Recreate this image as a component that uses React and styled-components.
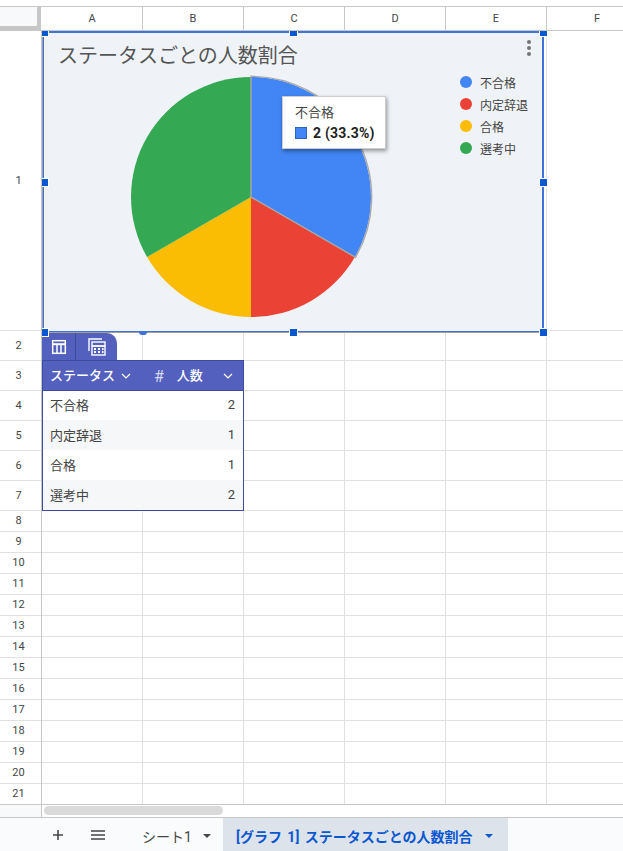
import React from "react";
import styled, { createGlobalStyle } from "styled-components";

const GlobalStyle = createGlobalStyle`
  html, body {
    margin: 0;
    padding: 0;
    background: #fff;
    overflow: hidden;
  }
  body {
    font-family: Roboto, "Noto Sans CJK JP", sans-serif;
  }
`;

const Page = styled.div`
  position: relative;
  width: 623px;
  height: 851px;
  overflow: hidden;
  display: flex;
  flex-direction: column;
  background: #fff;
  color: #444746;
`;

const TopStrip = styled.div`
  height: 6px;
  flex: none;
  border-bottom: 1px solid #c7c7c7;
`;

const ColumnHeader = styled.div`
  display: flex;
  height: 23px;
  flex: none;
  border-bottom: 1px solid #c7c7c7;
`;

const Corner = styled.div`
  width: 37px;
  height: 19px;
  flex: none;
  margin-right: 1px;
  background: #f8f9fa;
  border-right: 4px solid #c7c7c7;
  border-bottom: 4px solid #c7c7c7;
`;

const ColumnLabel = styled.div`
  width: 101px;
  flex: none;
  box-sizing: border-box;
  border-right: 1px solid #c7c7c7;
  display: flex;
  align-items: center;
  justify-content: center;
  font-size: 11px;
  padding-bottom: 1px;
`;

const Row = styled.div`
  display: flex;
  flex: none;
  height: ${(p) => p.$height}px;
  box-sizing: border-box;
  border-bottom: 1px solid #e1e1e1;
`;

const RowLabel = styled.div`
  width: 42px;
  flex: none;
  box-sizing: border-box;
  border-right: 1px solid #c7c7c7;
  display: flex;
  align-items: center;
  justify-content: center;
  font-size: 11px;
  padding: 0 4px 2px 0;
  margin-bottom: -1px;
`;

const Cell = styled.div`
  width: 101px;
  flex: none;
  box-sizing: border-box;
  border-right: 1px solid #e1e1e1;
  margin-bottom: -1px;
`;

const ScrollTrack = styled.div`
  display: flex;
  height: 14px;
  flex: none;
  box-sizing: border-box;
  border-top: 1px solid #c7c7c7;
  border-bottom: 1px solid #c7c7c7;
  margin-top: -1px;
`;

const ScrollGutter = styled.div`
  width: 42px;
  flex: none;
  box-sizing: border-box;
  background: #f8f9fa;
  border-right: 1px solid #c7c7c7;
`;

const ScrollThumb = styled.div`
  width: 179px;
  height: 9px;
  margin: 1px 0 0 2px;
  border-radius: 5px;
  background: #dadada;
`;

const TabBar = styled.div`
  flex: 1;
  display: flex;
  align-items: center;
  padding-left: 38px;
  background: #f9fbfd;
  font-size: 14px;
`;

const BarButton = styled.div`
  flex: none;
  width: 40px;
  height: 100%;
  display: flex;
  align-items: center;
  justify-content: center;
  color: #444746;
`;

const SheetTab = styled.div`
  height: 100%;
  display: flex;
  align-items: center;
  box-sizing: border-box;
  flex: none;
  font-weight: ${(p) => (p.$active ? 700 : 400)};
  color: ${(p) => (p.$active ? "#0b57d0" : "#444746")};
  background: ${(p) => (p.$active ? "#dde3ea" : "transparent")};
  padding-left: ${(p) => (p.$active ? 13 : 24)}px;
  padding-top: 3px;
  width: ${(p) => (p.$active ? 285 : 105)}px;
  word-spacing: ${(p) => (p.$active ? 2 : 0)}px;
  white-space: nowrap;
`;

const TabCaret = styled.span`
  width: 0;
  height: 0;
  margin-left: ${(p) => p.$gap}px;
  border-left: 4px solid transparent;
  border-right: 4px solid transparent;
  border-top: 4px solid currentColor;
`;

const ChartFrame = styled.div`
  position: absolute;
  left: 43px;
  top: 31px;
  width: 501px;
  height: 301px;
  box-sizing: border-box;
  background: #eff3f8;
  border: 2px solid #3f73d8;
  border-left-width: 1px;
  border-bottom-width: 1px;
  box-shadow: -1px 1px 0 #9e9e9e;
`;

const ChartTitle = styled.div`
  position: absolute;
  left: 14px;
  top: 9px;
  font-size: 20px;
  line-height: 28px;
  color: #555;
  white-space: nowrap;
`;

const MoreDots = styled.div`
  position: absolute;
  right: 11px;
  top: 7px;
  display: flex;
  flex-direction: column;
  gap: 2px;
`;

const Dot = styled.span`
  width: 4px;
  height: 4px;
  border-radius: 50%;
  background: #757575;
`;

const PieSvg = styled.svg`
  position: absolute;
  left: 84px;
  top: 41px;
`;

const Legend = styled.div`
  position: absolute;
  left: 416px;
  top: 38px;
  display: flex;
  flex-direction: column;
`;

const LegendItem = styled.div`
  display: flex;
  align-items: center;
  gap: 8px;
  height: 22px;
  font-size: 12px;
  color: #444;
`;

const LegendDot = styled.span`
  width: 12px;
  height: 12px;
  border-radius: 50%;
  background: ${(p) => p.$color};
`;

const Tooltip = styled.div`
  position: absolute;
  left: 238px;
  top: 63px;
  width: 104px;
  height: 53px;
  box-sizing: border-box;
  padding: 7px 12px;
  background: #fff;
  border: 1px solid #ccc;
  box-shadow: 1px 2px 4px rgba(0, 0, 0, 0.4);
  font-size: 13px;
`;

const TooltipLabel = styled.div`
  line-height: 18px;
  color: #444;
`;

const TooltipValue = styled.div`
  display: flex;
  align-items: center;
  gap: 6px;
  margin-top: 3px;
  font-size: 14px;
  font-weight: 700;
  letter-spacing: 0.2px;
  line-height: 16px;
  color: #222;
  white-space: nowrap;
`;

const Swatch = styled.span`
  flex: none;
  width: 10px;
  height: 10px;
  background: #4285f4;
  border: 1px solid #2f62b8;
`;

const HandleLayer = styled.div`
  position: absolute;
  left: 42px;
  top: 31px;
  width: 510px;
  height: 310px;
  overflow: hidden;
`;

const Handle = styled.span`
  position: absolute;
  width: 7px;
  height: 7px;
  background: #0b57d0;
  outline: 1px solid #fff;
  left: ${(p) => p.$x - 42}px;
  top: ${(p) => p.$y - 31}px;
`;

const TableAnchor = styled.span`
  position: absolute;
  left: 139px;
  top: 332px;
  width: 8px;
  height: 3px;
  border-radius: 0 0 4px 4px;
  background: #3f73d8;
`;

const TableWrap = styled.div`
  position: absolute;
  left: 42px;
  top: 333px;
  width: 202px;
`;

const ViewTabs = styled.div`
  display: flex;
  width: 75px;
  height: 27px;
  background: #5360bd;
  border-radius: 0 10px 0 0;
`;

const ViewTab = styled.div`
  flex: ${(p) => (p.$wide ? 1 : "none")};
  width: ${(p) => (p.$wide ? "auto" : "33px")};
  display: flex;
  align-items: center;
  justify-content: center;
  color: #fff;
  border-right: ${(p) => (p.$wide ? "none" : "1px solid #3d4a9e")};
`;

const Table = styled.div`
  border: 1px solid #3d4a9e;
  box-sizing: border-box;
  height: 151px;
  width: 202px;
`;

const HeadRow = styled.div`
  display: flex;
  align-items: center;
  box-sizing: border-box;
  height: 30px;
  padding-bottom: 2px;
  background: #5360bd;
  color: #fff;
  font-size: 13px;
  font-weight: 500;
  border-bottom: 1px solid #3d4a9e;
`;

const HeadStatus = styled.div`
  display: flex;
  align-items: center;
  width: 100px;
  padding-left: 7px;
  box-sizing: border-box;
  flex: none;
  gap: 5px;
`;

const HeadCount = styled.div`
  display: flex;
  align-items: center;
  flex: 1;
  padding-left: 11px;
  padding-right: 9px;
  justify-content: space-between;
`;

const HeadName = styled.span`
  display: flex;
  align-items: center;
  gap: 13px;
`;

const Hash = styled.span`
  color: #d5d8ef;
  font-size: 16px;
  line-height: 16px;
  font-weight: 400;
  margin-top: 4px;
`;

const ChevronSvg = styled.svg`
  margin-top: 2px;
`;

const BodyRow = styled.div`
  display: flex;
  align-items: center;
  justify-content: space-between;
  height: 30px;
  padding: 0 8px 2px 7px;
  box-sizing: border-box;
  font-size: 13px;
  color: #444;
  background: ${(p) => (p.$alt ? "#f6f7f9" : "#fff")};

  &:nth-child(2) {
    height: 29px;
  }
`;

const COLUMNS = ["A", "B", "C", "D", "E", "F"];

const ROWS = [
  { n: 1, h: 300 },
  ...[2, 3, 4, 5, 6, 7].map((n) => ({ n, h: 30 })),
  ...Array.from({ length: 14 }, (_, i) => ({ n: i + 8, h: 21 })),
];

const LEGEND = [
  { label: "不合格", color: "#4285f4" },
  { label: "内定辞退", color: "#ea4335" },
  { label: "合格", color: "#fbbc04" },
  { label: "選考中", color: "#34a853" },
];

const DATA = [
  { label: "不合格", value: 2 },
  { label: "内定辞退", value: 1 },
  { label: "合格", value: 1 },
  { label: "選考中", value: 2 },
];

const HANDLES = [
  [41, 29], [290, 29], [540, 29],
  [41, 179], [540, 179],
  [41, 329], [290, 329], [540, 329],
];

function Chevron() {
  return (
    <ChevronSvg width="12" height="12" viewBox="0 0 12 12" fill="none" stroke="#fff" strokeWidth="1.2">
      <path d="M2 4l4 4 4-4" />
    </ChevronSvg>
  );
}

function Pie() {
  return (
    <PieSvg width="246" height="246" viewBox="-123 -123 246 246">
      <path d="M0 0L0 -120A120 120 0 0 1 103.9 60Z" fill="#4285f4" />
      <path d="M0 0L103.9 60A120 120 0 0 1 0 120Z" fill="#ea4335" />
      <path d="M0 0L0 120A120 120 0 0 1 -103.9 60Z" fill="#fbbc04" />
      <path d="M0 0L-103.9 60A120 120 0 0 1 0 -120Z" fill="#34a853" />
      <path d="M0 0L0 -120.7A120.7 120.7 0 0 1 104.5 60.3Z" fill="none" stroke="#a9a9a9" strokeWidth="1.4" />
    </PieSvg>
  );
}

function TableIcon() {
  return (
    <svg width="16" height="16" viewBox="0 0 16 16" fill="none" stroke="#fff" strokeWidth="1.5">
      <rect x="1.7" y="1.7" width="12.6" height="12.6" />
      <path d="M1.7 5.2h12.6" strokeWidth="2" />
      <path d="M6 5.5v8.8M10 5.5v8.8" />
    </svg>
  );
}

function CalcIcon() {
  return (
    <svg width="18" height="18" viewBox="0 0 18 18" fill="none" stroke="#fff" strokeWidth="1.4">
      <path d="M1 13V1h13" />
      <rect x="4" y="4" width="13" height="13" />
      <path d="M4 8h13" strokeWidth="1.8" />
      <path d="M6 11h2M10 11h2M14 11h1.5M6 14h2M10 14h2M14 14h1.5" strokeWidth="1.8" />
    </svg>
  );
}

export default function App() {
  return (
    <Page>
      <GlobalStyle />
      <TopStrip />
      <ColumnHeader>
        <Corner />
        {COLUMNS.map((c) => (
          <ColumnLabel key={c}>{c}</ColumnLabel>
        ))}
      </ColumnHeader>
      {ROWS.map((r) => (
        <Row key={r.n} $height={r.h}>
          <RowLabel>{r.n}</RowLabel>
          {COLUMNS.map((c) => (
            <Cell key={c} />
          ))}
        </Row>
      ))}
      <ScrollTrack>
        <ScrollGutter />
        <ScrollThumb />
      </ScrollTrack>
      <TabBar>
        <BarButton>
          <svg width="12" height="12" viewBox="0 0 12 12" stroke="#444746" strokeWidth="1.6">
            <path d="M6 1v10M1 6h10" />
          </svg>
        </BarButton>
        <BarButton>
          <svg width="16" height="12" viewBox="0 0 16 12" stroke="#444746" strokeWidth="1.6">
            <path d="M1 2h14M1 6h14M1 10h14" />
          </svg>
        </BarButton>
        <SheetTab>
          シート1
          <TabCaret $gap={11} />
        </SheetTab>
        <SheetTab $active>
          [グラフ 1] ステータスごとの人数割合
          <TabCaret $gap={12} />
        </SheetTab>
      </TabBar>

      <TableWrap>
        <ViewTabs>
          <ViewTab>
            <TableIcon />
          </ViewTab>
          <ViewTab $wide>
            <CalcIcon />
          </ViewTab>
        </ViewTabs>
        <Table>
          <HeadRow>
            <HeadStatus>
              ステータス
              <Chevron />
            </HeadStatus>
            <HeadCount>
              <HeadName>
                <Hash>#</Hash>
                人数
              </HeadName>
              <Chevron />
            </HeadCount>
          </HeadRow>
          {DATA.map((d, i) => (
            <BodyRow key={d.label} $alt={i % 2 === 1}>
              <span>{d.label}</span>
              <span>{d.value}</span>
            </BodyRow>
          ))}
        </Table>
      </TableWrap>

      <ChartFrame>
        <ChartTitle>ステータスごとの人数割合</ChartTitle>
        <MoreDots>
          <Dot />
          <Dot />
          <Dot />
        </MoreDots>
        <Pie />
        <Legend>
          {LEGEND.map((l) => (
            <LegendItem key={l.label}>
              <LegendDot $color={l.color} />
              {l.label}
            </LegendItem>
          ))}
        </Legend>
        <Tooltip>
          <TooltipLabel>不合格</TooltipLabel>
          <TooltipValue>
            <Swatch />2 (33.3%)
          </TooltipValue>
        </Tooltip>
      </ChartFrame>
      <TableAnchor />
      <HandleLayer>
        {HANDLES.map(([x, y]) => (
          <Handle key={`${x}-${y}`} $x={x} $y={y} />
        ))}
      </HandleLayer>
    </Page>
  );
}
